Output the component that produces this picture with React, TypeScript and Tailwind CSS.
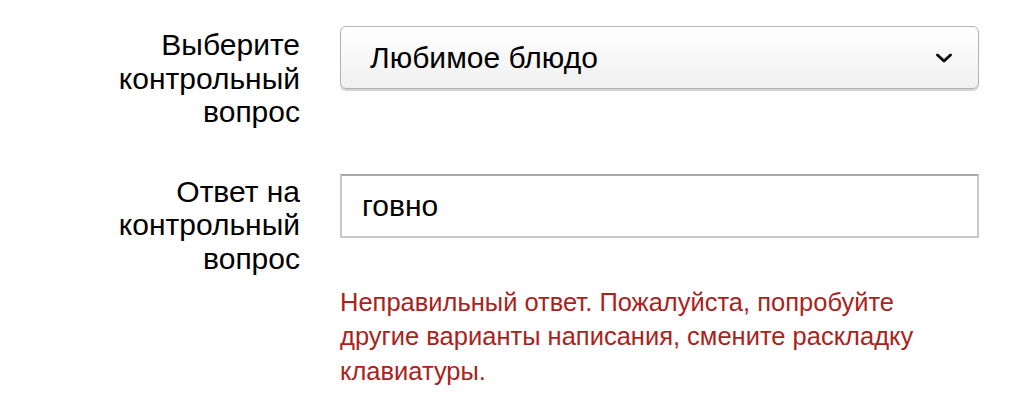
import React from "react";

const font = { fontFamily: '"Liberation Sans", Arial, sans-serif' };

export default function App() {
  return (
    <div className="min-h-[420px] w-[1018px] bg-white text-black" style={font}>
      <div className="grid grid-cols-[300px_639px] gap-x-[40px] pt-[26px]">
        <div className="pt-[2px] text-right text-[30px] leading-[33.5px]">
          Выберите
          <br />
          контрольный
          <br />
          вопрос
        </div>
        <div>
          <div className="flex h-[63px] items-center justify-between rounded-[6px] border border-[#b4b4b4] bg-gradient-to-b from-[#ffffff] to-[#f0f0f0] pl-[29px] pr-[25px] shadow-[0_2px_1px_rgba(0,0,0,0.18)]">
            <span className="text-[30px]">Любимое блюдо</span>
            <svg width="18" height="12" viewBox="0 0 18 12" className="mt-[1px]">
              <path d="M2.5 3 L9 9 L15.5 3" fill="none" stroke="#111" strokeWidth="3" strokeLinecap="round" strokeLinejoin="round" />
            </svg>
          </div>
        </div>

        <div className="mt-[45px] pt-[1px] text-right text-[30px] leading-[33.5px]">
          Ответ на
          <br />
          контрольный
          <br />
          вопрос
        </div>
        <div className="mt-[45px]">
          <div className="flex h-[64px] items-center border-2 border-[#c9c9c9] border-t-[#a9a9a9] bg-white pl-[20px]">
            <span className="text-[30px]">говно</span>
          </div>
          <p className="mt-[47px] text-[25.5px] leading-[34.5px] text-[#a9231c]">
            Неправильный ответ. Пожалуйста, попробуйте
            <br />
            другие варианты написания, смените раскладку
            <br />
            клавиатуры.
          </p>
        </div>
      </div>
    </div>
  );
}
